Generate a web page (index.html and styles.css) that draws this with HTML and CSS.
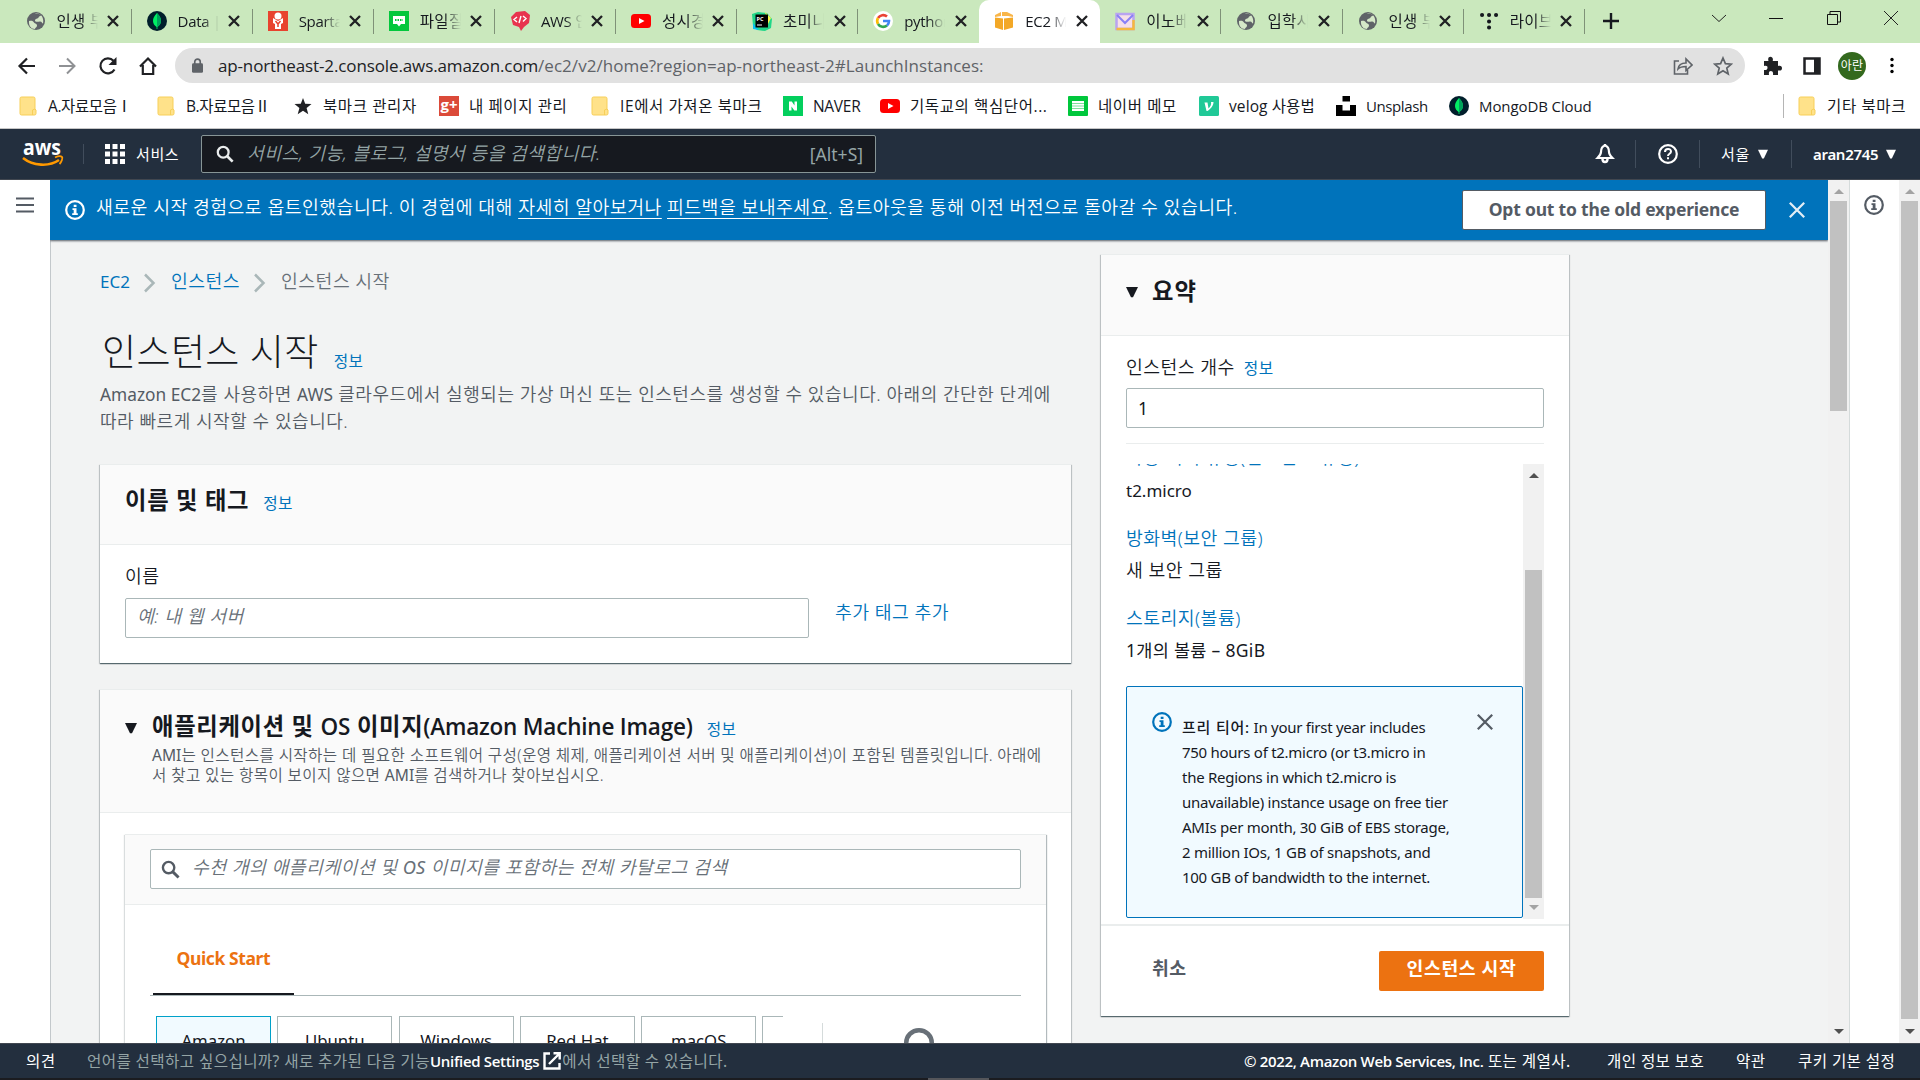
FILE: index.html
```html
<!DOCTYPE html>
<html lang="ko">
<head>
    <meta charset="UTF-8">
    <title>EC2 Management Console</title>
    <link rel="stylesheet" href="styles.css">
</head>
<body>
    <svg class="defs" width="0" height="0">
        <symbol id="globe" viewBox="0 0 20 20">
            <circle cx="10" cy="10" r="9" fill="#5f6368"/>
            <path d="M3 10c3-.5 4 0 5 1.500s3 1 3 3-2 2-2 3.500C5 18 2.500 14.500 3 10zM9 2.500c2-.5 5 .5 6 2-1 1-2 .5-2.500 2S9 7.500 9 9.500s3 1 5 1 2 2 3 2c1-4-.5-8-4-9.500z" fill="#d5e8c8"/>
        </symbol>
        <symbol id="leaf" viewBox="0 0 20 20">
            <circle cx="10" cy="10" r="10" fill="#001e2b"/>
            <path d="M10 2c3 3 4 5.500 4 8s-1.500 4.500-3.600 6v2h-.8v-2C7.500 14.500 6 12.500 6 10s1-5 4-8z" fill="#00ed64"/>
            <path d="M10 2c3 3 4 5.500 4 8s-1.500 4.500-4 6z" fill="#00a35c"/>
        </symbol>
        <symbol id="youtube" viewBox="0 0 20 20">
            <rect y="3" width="20" height="14" rx="3.500" fill="#f00"/>
            <path d="M8 7l5.500 3L8 13z" fill="#fff"/>
        </symbol>
        <symbol id="folder" viewBox="0 0 20 20">
            <path d="M2 2.500a1.500 1.500 0 0 1 1.500-1.500h12A1.500 1.500 0 0 1 17 2.500V13l1 1v3.500a1.500 1.500 0 0 1-1.500 1.500h-13A1.500 1.500 0 0 1 2 17.500z" fill="#ffe28a" stroke="#f7cf59"/>
            <path d="M14.500 19v-5l2.500-1" fill="none" stroke="#f7cf59"/>
        </symbol>
        <symbol id="search" viewBox="0 0 20 20">
            <circle cx="8" cy="8" r="6" fill="none" stroke="currentColor" stroke-width="2.500"/>
            <path d="M12.500 12.500l6 6" stroke="currentColor" stroke-width="3"/>
        </symbol>
        <symbol id="info" viewBox="0 0 20 20">
            <circle cx="10" cy="10" r="8.800" fill="none" stroke="currentColor" stroke-width="2.200"/>
            <path d="M8.700 4.800h2.800v2.200H8.700zM7.500 8.300h4v5h1.300v1.700H7.200v-1.700h1.500v-3.300H7.500z" fill="currentColor"/>
        </symbol>
        <symbol id="close" viewBox="0 0 20 20">
            <path d="M2 2l16 16M18 2L2 18" stroke="currentColor" stroke-width="2.500"/>
        </symbol>
        <symbol id="tabx" viewBox="0 0 12 12">
            <path d="M1 1l10 10M11 1L1 11" stroke="#202124" stroke-width="2.300"/>
        </symbol>
        <symbol id="down" viewBox="0 0 12 12">
            <path d="M0 1h12L7 11.300H5z" fill="currentColor"/>
        </symbol>
    </svg>

    <!-- browser tabs -->
    <div class="tabs">
        <div class="tab"><svg><use href="#globe"/></svg><span>인생 부</span><svg class="x"><use href="#tabx"/></svg></div>
        <div class="tab"><svg><use href="#leaf"/></svg><span class="en">Data | M</span><svg class="x"><use href="#tabx"/></svg></div>
        <div class="tab"><svg viewBox="0 0 20 20"><rect width="20" height="20" fill="#e8432e"/><circle cx="10" cy="5" r="3.500" fill="#fff"/><path d="M5 7l5 3 5-3v5l-2 1v5H7v-5l-2-1z" fill="#fff"/><path d="M7.500 10l2.500 3 2.500-3M10 13v3" stroke="#e8432e" stroke-width="1.500" fill="none"/></svg><span class="en">Spartac</span><svg class="x"><use href="#tabx"/></svg></div>
        <div class="tab"><svg viewBox="0 0 20 20"><rect width="20" height="20" fill="#03c73c"/><path d="M4 5h12v8h-4l-2 2.500L8 13H4z" fill="#fff"/><path d="M6 9h8" stroke="#03c73c" stroke-width="2" stroke-dasharray="1.500 1"/></svg><span>파일질문</span><svg class="x"><use href="#tabx"/></svg></div>
        <div class="tab"><svg viewBox="0 0 20 20"><path d="M1 6l5-5 9-1 5 4-1 8-5 4-3 4-2-4-6-2z" fill="#e8344e"/><path d="M7 6L4 8.500 7 11M13 5l3 2.500-3 3M11 5l-2 7" stroke="#fff" stroke-width="1.400" fill="none"/></svg><span class="en">AWS 인</span><svg class="x"><use href="#tabx"/></svg></div>
        <div class="tab"><svg><use href="#youtube"/></svg><span>성시경</span><svg class="x"><use href="#tabx"/></svg></div>
        <div class="tab"><svg viewBox="0 0 20 20"><path d="M0 3l6-2 9 1 5 6-1 9-6 3-8-1-4-4z" fill="#21d789"/><path d="M13 1l6 6-3 6z" fill="#fcf84a"/><path d="M1 12l6 7-6-1z" fill="#07c3f2"/><rect x="3.500" y="3.500" width="12.500" height="13" fill="#000"/><text x="4.500" y="10" class="pc">PC</text><path d="M5 14h5" stroke="#fff"/></svg><span>초미니</span><svg class="x"><use href="#tabx"/></svg></div>
        <div class="tab"><svg viewBox="0 0 20 20"><circle cx="10" cy="10" r="10" fill="#fff"/><path d="M5 7a6 6 0 0 1 9-1.500" stroke="#ea4335" stroke-width="2.600" fill="none"/><path d="M5 7a6 6 0 0 0 0 6" stroke="#fbbc05" stroke-width="2.600" fill="none"/><path d="M5 13a6 6 0 0 0 9 1.500" stroke="#34a853" stroke-width="2.600" fill="none"/><path d="M10 10h6a6 6 0 0 1-2 4.500" stroke="#4285f4" stroke-width="2.600" fill="none"/></svg><span class="en">python</span><svg class="x"><use href="#tabx"/></svg></div>
        <div class="tab active"><svg viewBox="0 0 20 20"><path d="M1 4l6-3v4l-6 1zM8 1h5l6 3v2l-5-1H8z" fill="#f9b64a"/><path d="M1 6.500l8 1V19l-8-2.500zM10 7.500l9-1V16.500L10 19z" fill="#f3a827"/></svg><span class="en">EC2 Ma</span><svg class="x"><use href="#tabx"/></svg></div>
        <div class="tab"><svg viewBox="0 0 20 20"><path d="M1.500 3h17v15h-17z" fill="#f6dfe8" stroke="#b9a4f0" stroke-width="2.500"/><path d="M1.500 18h17V9" stroke="#f6b93c" stroke-width="2.500" fill="none"/><path d="M2 4l8 8 8-8" fill="none" stroke="#8a80f5" stroke-width="2"/></svg><span>이노베이</span><svg class="x"><use href="#tabx"/></svg></div>
        <div class="tab"><svg><use href="#globe"/></svg><span>입학시</span><svg class="x"><use href="#tabx"/></svg></div>
        <div class="tab"><svg><use href="#globe"/></svg><span>인생 부</span><svg class="x"><use href="#tabx"/></svg></div>
        <div class="tab"><svg viewBox="0 0 20 20"><path d="M3 4h.1M10 4h.1M17 4h.1M10 10.500h.1M10 16.500h.1" stroke="#16191f" stroke-width="4" stroke-linecap="round"/></svg><span>라이브</span><svg class="x"><use href="#tabx"/></svg></div>
        <svg class="newtab" viewBox="0 0 16 16"><path d="M8 0v16M0 8h16" stroke="#16191f" stroke-width="2.400"/></svg>
        <div class="window-controls">
            <svg viewBox="0 0 14 14"><path d="M0 4l7 6.500L14 4" fill="none" stroke="#222"/></svg>
            <svg viewBox="0 0 14 14"><path d="M0 7.500h14" stroke="#111"/></svg>
            <svg viewBox="0 0 14 14"><path d="M.5 3.500h10v10H.5zM3 3.500V.5h10.500V11h-3" fill="none" stroke="#111"/></svg>
            <svg viewBox="0 0 14 14"><path d="M0 0l14 14M14 0L0 14" stroke="#222"/></svg>
        </div>
    </div>

    <!-- address bar -->
    <div class="toolbar">
        <svg class="tool" viewBox="0 0 20 20"><path d="M18 10H3M10 2.500L2.500 10l7.500 7.500" fill="none" stroke="#202124" stroke-width="2.200"/></svg>
        <svg class="tool" viewBox="0 0 20 20"><path d="M2 10h15M10 2.500l7.500 7.500-7.500 7.500" fill="none" stroke="#8f9194" stroke-width="2"/></svg>
        <svg class="tool" viewBox="0 0 20 20"><path d="M16.500 13.500A7.500 7.500 0 1 1 15.500 4.800" fill="none" stroke="#202124" stroke-width="2.200"/><path d="M18.500 1v8h-8z" fill="#202124"/></svg>
        <svg class="tool home" viewBox="0 0 20 20"><path d="M2 10.500L10 2.500l8 8M4.800 9v9h10.400V9" fill="none" stroke="#202124" stroke-width="2.200"/></svg>
        <div class="address">
            <svg class="lock" viewBox="0 0 12 16"><rect y="5.500" width="12" height="10.500" rx="1.500" fill="#5f6368"/><path d="M3 7V4a3 3 0 0 1 6 0v3" fill="none" stroke="#5f6368" stroke-width="1.800"/></svg>
            <div class="url"><span class="host">ap-northeast-2.console.aws.amazon.com</span><span class="path">/ec2/v2/home?region=ap-northeast-2#LaunchInstances:</span></div>
            <svg class="share" viewBox="0 0 20 20"><path d="M6 5H1.500v13h13v-4M5 13c.5-4 3-6 8-6V3l6 6-6 5.500v-4c-4 0-6 .5-8 2.500z" fill="none" stroke="#5f6368" stroke-width="1.600"/></svg>
            <svg class="fav" viewBox="0 0 20 20"><path d="M10 2l2.400 5.600 6 .5-4.600 4 1.400 5.900-5.200-3.200L4.800 18l1.400-5.900-4.600-4 6-.5z" fill="none" stroke="#5f6368" stroke-width="1.700"/></svg>
        </div>
        <svg class="tool ext" viewBox="0 0 20 20"><path d="M2 5h4.500C5.500 2 7 .8 8.500.8S11.500 2 10.700 5H16v5c3-.8 4 .8 4 2.200s-1 3-4 2.200V19h-5c.5-3-.8-4-2.200-4S6.500 16 7 19H2v-5c3 .3 3.500-1 3.500-2.300S5 9.500 2 10z" fill="#202124"/></svg>
        <svg class="tool panel" viewBox="0 0 18 18"><path d="M1.500 1.500h15v15h-15z" fill="#fff" stroke="#202124" stroke-width="2.500"/><path d="M11 1h6v16h-6z" fill="#202124"/></svg>
        <span class="avatar">아란</span>
        <svg class="tool dots" viewBox="0 0 20 20"><circle cx="10" cy="3" r="2"/><circle cx="10" cy="10" r="2"/><circle cx="10" cy="17" r="2"/></svg>
    </div>

    <div class="bookmarks">
        <div class="bookmark b1"><svg><use href="#folder"/></svg><span>A.자료모음Ⅰ</span></div>
        <div class="bookmark b2"><svg><use href="#folder"/></svg><span>B.자료모음Ⅱ</span></div>
        <div class="bookmark b3"><svg viewBox="0 0 20 20"><path d="M10 2l2.200 5.800 6.300.3-4.900 4 1.700 6.200L10 14.800l-5.300 3.500 1.700-6.200-4.900-4 6.300-.3z" fill="#202124"/></svg><span>북마크 관리자</span></div>
        <div class="bookmark b4"><svg viewBox="0 0 20 20"><rect width="20" height="20" fill="#db4a39"/><text x="1.500" y="14" class="gplus">g+</text></svg><span>내 페이지 관리</span></div>
        <div class="bookmark b5"><svg><use href="#folder"/></svg><span>IE에서 가져온 북마크</span></div>
        <div class="bookmark b6"><svg viewBox="0 0 20 20"><rect width="20" height="20" fill="#03cf5d"/><path d="M6 14.500v-9h2.800l2.700 4v-4H14v9h-2.700l-2.800-4v4z" fill="#fff"/></svg><span>NAVER</span></div>
        <div class="bookmark b7"><svg><use href="#youtube"/></svg><span>기독교의 핵심단어...</span></div>
        <div class="bookmark b8"><svg viewBox="0 0 20 20"><rect width="20" height="20" rx="1" fill="#00c73c"/><path d="M4 5h12v10H4z" fill="#fff"/><path d="M4 7.500h12M4 10h12M4 12.500h12" stroke="#7fe09b"/></svg><span>네이버 메모</span></div>
        <div class="bookmark b9"><svg viewBox="0 0 20 20"><rect width="20" height="20" rx="1.500" fill="#20c997"/><path d="M5.500 6.500h3l1 6c2-2 3-4 2.500-6.500h2.500c0 4-3 7-6 9H7.500z" fill="#fff"/></svg><span>velog 사용법</span></div>
        <div class="bookmark b10"><svg viewBox="0 0 20 20"><path d="M6.500 0h7.500v5.500H6.500zM0 9h6.500v5.500H14V9h6v11H0z" fill="#000"/></svg><span>Unsplash</span></div>
        <div class="bookmark b11"><svg><use href="#leaf"/></svg><span>MongoDB Cloud</span></div>
        <div class="bookmark other"><svg><use href="#folder"/></svg><span>기타 북마크</span></div>
    </div>

    <!-- aws navigation -->
    <div class="nav">
        <svg class="aws" viewBox="0 0 42 28"><text x="1" y="15" textLength="38" lengthAdjust="spacingAndGlyphs">aws</text><path d="M1 18c10 8 26 9 36 2" fill="none" stroke="#f90" stroke-width="2.600"/><path d="M33 17.500c3-1.500 6-1.500 7-.5s-.5 5-2.500 7" fill="none" stroke="#f90" stroke-width="1.800"/></svg>
        <svg class="grid" viewBox="0 0 20 20"><path d="M0 0h5v5H0zM7.500 0h5v5h-5zM15 0h5v5h-5zM0 7.500h5v5H0zM7.500 7.500h5v5h-5zM15 7.500h5v5h-5zM0 15h5v5H0zM7.500 15h5v5h-5zM15 15h5v5h-5z" fill="#fff"/></svg>
        <span class="services">서비스</span>
        <div class="nav-search">
            <svg><use href="#search"/></svg>
            <span class="ph ko">서비스, 기능, 블로그, 설명서 등을 검색합니다.</span>
            <span class="key">[Alt+S]</span>
        </div>
        <div class="nav-item bell"><svg viewBox="0 0 20 20"><path d="M10 1.500c-3.500 1-4 3.500-4 6.500 0 2.500-1.500 4-3.500 6h15c-2-2-3.500-3.500-3.500-6 0-3-.5-5.500-4-6.500z" fill="none" stroke="#fff" stroke-width="2.200"/><path d="M10 0v2M7.500 15a2.500 3 0 0 0 5 0" stroke="#fff" stroke-width="2.400" fill="none"/></svg></div>
        <div class="nav-item help"><svg viewBox="0 0 20 20"><circle cx="10" cy="10" r="8.800" fill="none" stroke="#fff" stroke-width="2.200"/><path d="M7 8c0-4 6-4 6-.5 0 2.500-3 2-3 4.500M10 13.300v2" fill="none" stroke="#fff" stroke-width="2"/></svg></div>
        <div class="nav-item region"><span>서울</span><svg><use href="#down"/></svg></div>
        <div class="nav-item user"><span>aran2745</span><svg><use href="#down"/></svg></div>
    </div>

    <div class="page">
        <div class="rail"><svg viewBox="0 0 18 16"><path d="M0 1.500h18M0 8h18M0 14.500h18" stroke="#545b64" stroke-width="2"/></svg></div>
        <div class="main">
            <div class="banner">
                <svg class="banner-info"><use href="#info"/></svg>
                <p class="banner-text ko">새로운 시작 경험으로 옵트인했습니다. 이 경험에 대해 <a>자세히 알아보거나</a> <a>피드백을 보내주세요</a>. 옵트아웃을 통해 이전 버전으로 돌아갈 수 있습니다.</p>
                <button class="optout">Opt out to the old experience</button>
                <svg class="banner-close"><use href="#close"/></svg>
            </div>
            <div class="content">
                <div class="form">
                    <div class="crumbs">
                        <a class="ec2">EC2</a>
                        <svg viewBox="0 0 12 20"><path d="M1 1.500l8.500 8.500L1 18.500" fill="none" stroke="#aab7b8" stroke-width="2.500"/></svg>
                        <a class="ko">인스턴스</a>
                        <svg viewBox="0 0 12 20"><path d="M1 1.500l8.500 8.500L1 18.500" fill="none" stroke="#aab7b8" stroke-width="2.500"/></svg>
                        <span class="ko">인스턴스 시작</span>
                    </div>
                    <div class="heading"><h1>인스턴스 시작</h1><a class="info">정보</a></div>
                    <p class="intro"><span class="lt">Amazon EC2</span>를 사용하면 <span class="lt">AWS</span> 클라우드에서 실행되는 가상 머신 또는 인스턴스를 생성할 수 있습니다. 아래의 간단한 단계에<br>따라 빠르게 시작할 수 있습니다.</p>

                    <div class="card name-card">
                        <div class="card-head"><h2>이름 및 태그</h2><a class="info">정보</a></div>
                        <div class="card-body">
                            <label class="ko">이름</label>
                            <div class="name-row">
                                <div class="input"><span class="ph ko">예: 내 웹 서버</span></div>
                                <a class="ko">추가 태그 추가</a>
                            </div>
                        </div>
                    </div>

                    <div class="card ami-card">
                        <div class="ami-head">
                            <svg class="tri"><use href="#down"/></svg>
                            <div>
                                <div class="ami-title"><h2>애플리케이션 및 <span class="latin">OS</span> 이미지<span class="latin">(Amazon Machine Image)</span></h2><a class="info">정보</a></div>
                                <p class="ami-desc"><span class="lt">AMI</span>는 인스턴스를 시작하는 데 필요한 소프트웨어 구성(운영 체제, 애플리케이션 서버 및 애플리케이션)이 포함된 템플릿입니다. 아래에<br>서 찾고 있는 항목이 보이지 않으면 <span class="lt">AMI</span>를 검색하거나 찾아보십시오.</p>
                            </div>
                        </div>
                        <div class="catalog">
                            <div class="catalog-head">
                                <div class="input"><svg><use href="#search"/></svg><span class="ph ko">수천 개의 애플리케이션 및 <span class="lt">OS</span> 이미지를 포함하는 전체 카탈로그 검색</span></div>
                            </div>
                            <div class="catalog-tabs"><div class="quick">Quick Start</div></div>
                            <div class="os-row">
                                <div class="os-list">
                                    <div class="os selected">Amazon</div>
                                    <div class="os">Ubuntu</div>
                                    <div class="os">Windows</div>
                                    <div class="os">Red Hat</div>
                                    <div class="os">macOS</div>
                                    <div class="os"></div>
                                </div>
                                <div class="browse"><svg viewBox="0 0 34 34"><circle cx="17" cy="17" r="12.800" fill="none" stroke="#687078" stroke-width="4.500"/></svg></div>
                            </div>
                        </div>
                    </div>
                </div>

                <div class="card summary">
                    <div class="sum-head"><svg class="tri"><use href="#down"/></svg><h2>요약</h2></div>
                    <div class="sum-count">
                        <div class="count-label"><label class="ko">인스턴스 개수</label><a class="info">정보</a></div>
                        <div class="input">1</div>
                    </div>
                    <div class="sum-scroll">
                        <div class="sum-list">
                            <a class="ko cut">가상 서버 유형(인스턴스 유형)</a>
                            <p class="micro">t2.micro</p>
                            <a class="ko">방화벽(보안 그룹)</a>
                            <p class="ko">새 보안 그룹</p>
                            <a class="ko">스토리지(볼륨)</a>
                            <p class="gib">1개의 볼륨 – 8GiB</p>
                            <div class="alert">
                                <svg class="alert-info"><use href="#info"/></svg>
                                <p class="alert-text"><b>프리 티어:</b> In your first year includes<br>750 hours of t2.micro (or t3.micro in<br>the Regions in which t2.micro is<br>unavailable) instance usage on free tier<br>AMIs per month, 30 GiB of EBS storage,<br>2 million IOs, 1 GB of snapshots, and<br>100 GB of bandwidth to the internet.</p>
                                <svg class="alert-close"><use href="#close"/></svg>
                            </div>
                        </div>
                        <div class="bar"><i class="up on"></i><b></b><i class="dn"></i></div>
                    </div>
                    <div class="sum-foot"><span class="cancel">취소</span><button class="launch">인스턴스 시작</button></div>
                </div>
            </div>
        </div>
        <div class="bar bar-main"><i class="up"></i><b></b><i class="dn on"></i></div>
        <div class="tools"><svg><use href="#info"/></svg></div>
        <div class="bar bar-page"><i class="up"></i><b></b><i class="dn on"></i></div>
    </div>

    <div class="footer">
        <span class="feedback">의견</span>
        <div class="lang"><span>언어를 선택하고 싶으십니까? 새로 추가된 다음 기능</span><b>Unified Settings</b><svg viewBox="0 0 18 18"><path d="M7 1.500H1.500v15h15V11M6 12L16 2M10.500 1.300h6.200v6.200" fill="none" stroke="#fff" stroke-width="2.400"/></svg><span>에서 선택할 수 있습니다.</span></div>
        <span class="copy"><b>© 2022, Amazon Web Services, Inc.</b> 또는 계열사.</span>
        <span class="f1">개인 정보 보호</span>
        <span class="f2">약관</span>
        <span class="f3">쿠키 기본 설정</span>
    </div>
    <div class="taskbar"><i></i></div>
</body>
</html>
```
FILE: styles.css
```css
* {
    box-sizing: border-box;
}
body {
    margin: 0;
    width: 1920px;
    height: 1080px;
    overflow: hidden;
    display: flex;
    flex-direction: column;
    background: #fff;
    color: #16191f;
    font-family: "Noto Sans", "Noto Sans CJK KR", sans-serif;
    font-size: 17.5px;
    line-height: 24px;
    white-space: nowrap;
}
h1, h2, p {
    margin: 0;
}
svg {
    display: block;
    flex: none;
}
button {
    border: none;
    padding: 0;
    font: inherit;
}
a {
    color: #0073bb;
}
.ko {
    font-size: 18.3px;
    font-weight: 350;
    letter-spacing: .45px;
}
.lt {
    font-weight: 400;
    letter-spacing: 0;
}
.defs {
    position: absolute;
}

/* browser tabs */
.tabs {
    display: flex;
    height: 43px;
    flex: none;
    padding-left: 10.500px;
    background: #cae8bd;
    font-family: "Open Sans", "Noto Sans CJK KR", sans-serif;
    font-size: 15.5px;
}
.tab {
    display: flex;
    align-items: center;
    width: 121.1px;
    height: 43px;
    padding: 0 9px 1px 15px;
    background: linear-gradient(#7f9178, #7f9178) no-repeat right 9px / 1px 25px;
}
.tab:nth-child(8), .tab:nth-child(9) {
    background: none;
}
.tab svg {
    width: 20px;
    height: 20px;
}
.tab span {
    width: 41px;
    margin-left: 11px;
    overflow: hidden;
    letter-spacing: .3px;
    -webkit-mask-image: linear-gradient(90deg, #000 60%, transparent);
    mask-image: linear-gradient(90deg, #000 60%, transparent);
}
.tab .en {
    font-size: 15px;
    letter-spacing: -.3px;
}
.tab .x {
    width: 12px;
    height: 12px;
    margin-left: 9.500px;
}
.tab.active {
    background: #fff;
    border-radius: 10px 10px 0 0;
    box-shadow: 0 10px 0 #fff;
}
.pc {
    font: bold 5.5px "Open Sans", sans-serif;
    fill: #fff;
}
.newtab {
    width: 16px;
    height: 16px;
    margin: 13px 0 0 18.500px;
}
.window-controls {
    display: flex;
    gap: 43.500px;
    margin: 11px 0 0 auto;
    padding-right: 22px;
}
.window-controls svg {
    width: 14px;
    height: 14px;
}

/* toolbar */
.toolbar {
    display: flex;
    align-items: center;
    flex: none;
    height: 45px;
    padding: 0 0 0 17px;
    background: #fff;
    z-index: 1;
}
.tool {
    width: 20px;
    height: 20px;
    margin-right: 20.300px;
}
.home {
    margin-right: 17px;
}
.address {
    display: flex;
    align-items: center;
    width: 1570px;
    height: 35px;
    padding: 0 12px 0 17px;
    border-radius: 18px;
    background: #e1e1e1;
}
.lock {
    width: 11px;
    height: 15px;
}
.url {
    flex: 1;
    margin-left: 15px;
    font-family: "Open Sans", sans-serif;
    font-size: 17px;
    color: #202124;
}
.host {
    letter-spacing: -.12px;
}
.path {
    color: #5f6368;
    letter-spacing: .03px;
}
.share, .fav {
    width: 20px;
    height: 20px;
    margin-left: 20px;
}
.ext {
    margin: 0 21px 0 17px;
}
.panel {
    width: 18px;
    height: 18px;
    margin-right: 17px;
}
.avatar {
    width: 28px;
    height: 28px;
    border-radius: 50%;
    background: #33691e;
    color: #fff;
    font-size: 12px;
    line-height: 27px;
    text-align: center;
}
.dots {
    margin: 0 0 0 16px;
    width: 20px;
    height: 17px;
}

/* bookmarks */
.bookmarks {
    display: flex;
    align-items: center;
    flex: none;
    height: 41px;
    padding: 0 0 5px 18px;
    border-bottom: 1px solid #c6c6c6;
    font-family: "Open Sans", "Noto Sans CJK KR", sans-serif;
    font-size: 15.5px;
    letter-spacing: .6px;
}
.bookmark {
    display: flex;
    align-items: center;
    gap: 10px;
}
.bookmark svg {
    width: 20px;
    height: 20px;
}
.b1, .b2 { letter-spacing: -.4px; }
.b1 { width: 138px; }
.b2 { width: 137px; }
.b3 { width: 146px; }
.b4 { width: 151px; }
.b5 { width: 193px; }
.b6 { width: 97px; letter-spacing: -.3px; }
.b7 { width: 188px; }
.b8 { width: 131px; }
.b9 { width: 137px; letter-spacing: .1px; }
.b10 { width: 113px; }
.b10, .b11 { font-size: 15px; letter-spacing: -.4px; }
.b11 { letter-spacing: -.1px; }
.other {
    margin-left: auto;
    padding: 0 14px 0 13px;
    border-left: 1px solid #b5b5b5;
}
.gplus {
    font: bold 15px "Open Sans", sans-serif;
    letter-spacing: 0;
    fill: #fff;
}

/* aws navigation */
.nav {
    display: flex;
    align-items: center;
    flex: none;
    height: 51px;
    padding-left: 22px;
    background: #232f3e;
    border-bottom: 1px solid #414750;
    color: #fff;
    font-size: 15px;
}
.aws {
    width: 42px;
    height: 28px;
}
.aws text {
    font: bold 21px "Open Sans", sans-serif;
    fill: #fff;
}
.grid {
    width: 42px;
    height: 20px;
    margin-left: 19px;
    padding-left: 21px;
    border-left: 1px solid #414d5c;
}
.services {
    width: 65px;
    margin-left: 11px;
    letter-spacing: .6px;
}
.nav-search {
    display: flex;
    align-items: center;
    width: 675px;
    height: 38px;
    padding: 0 12px 0 14px;
    border: 1px solid #879596;
    border-radius: 2px;
    background: #16191f;
    color: #95a5a6;
}
.nav-search svg {
    width: 18px;
    height: 18px;
    color: #eaeded;
}
.nav-search .ph {
    flex: 1;
    margin: -2px 0 0 13px;
    letter-spacing: .4px;
}
.key {
    font-size: 17.5px;
}
.ph {
    font-style: italic;
}
.nav-item {
    display: flex;
    align-items: center;
    height: 28px;
    border-left: 1px solid #414d5c;
}
.bell {
    width: 40px;
    margin-left: auto;
    border: none;
}
.help {
    width: 64px;
    padding-left: 22px;
}
.region {
    width: 92px;
    padding-left: 21px;
    letter-spacing: .6px;
}
.user {
    width: 129px;
    padding-left: 21px;
}
.nav-item svg {
    width: 20px;
    height: 20px;
}
.region svg, .user svg {
    width: 10px;
    height: 10px;
    margin-left: 8px;
}
.user span {
    font-weight: 600;
    letter-spacing: -.3px;
}

/* page frame */
.page {
    display: flex;
    height: 863px;
    flex: none;
}
.rail {
    width: 50px;
    padding: 17px 0 0 16px;
}
.rail svg {
    width: 18px;
    height: 16px;
}
.main {
    display: flex;
    flex-direction: column;
    width: 1778px;
    overflow: hidden;
}
.banner {
    display: flex;
    align-items: center;
    flex: none;
    height: 60px;
    padding: 0 22px 0 15px;
    background: #0073bb;
    color: #fff;
    box-shadow: 0 1px 2px #545b64;
    z-index: 1;
}
.banner a {
    color: #fff;
    text-decoration: underline;
    text-underline-offset: 4px;
    text-decoration-thickness: 1px;
}
.banner-info {
    width: 20px;
    height: 20px;
}
.banner-text {
    flex: 1;
    margin: -7px 0 0 11px;
    letter-spacing: .48px;
}
.optout {
    width: 304px;
    height: 40px;
    padding-bottom: 2px;
    border: 1px solid #545b64;
    border-radius: 2px;
    background: #fff;
    color: #545b64;
    font-weight: bold;
    letter-spacing: -.2px;
}
.banner-close {
    width: 18px;
    height: 18px;
    margin-left: 22px;
    color: #e3eef5;
}
.content {
    display: flex;
    flex: 1;
    align-items: flex-start;
    min-height: 0;
    padding-left: 49px;
    background: #f2f3f3;
    border-left: 1px solid #c3c8cb;
}
.form {
    width: 971px;
    padding-top: 29px;
}
.crumbs {
    display: flex;
    align-items: center;
    color: #687078;
}
.crumbs svg {
    width: 12px;
    height: 20px;
    margin: 4px 15px 0 14px;
}
.ec2 {
    width: 30px;
    padding-top: 2px;
    font-size: 17px;
    line-height: 22px;
}
.heading {
    display: flex;
    align-items: flex-end;
    height: 44px;
    margin: 37px 0 0 2px;
}
h1 {
    font-size: 37px;
    line-height: 44px;
    font-weight: 300;
    letter-spacing: .4px;
}
.info {
    margin-left: 14px;
    font-size: 15.7px;
    letter-spacing: .4px;
}
.heading .info {
    margin-left: 15px;
    padding-bottom: 1px;
}
.intro {
    margin-top: 7px;
    font-size: 18px;
    font-weight: 350;
    letter-spacing: .55px;
    line-height: 27px;
    color: #545b64;
}
.intro .lt {
    font-size: 17.3px;
}
.card {
    background: #fff;
    border-top: 1px solid #eaeded;
    box-shadow: 0 1px 1px 0 rgba(0, 28, 36, .5), 1px 1px 1px 0 rgba(0, 28, 36, .15), -1px 1px 1px 0 rgba(0, 28, 36, .15);
}
h2 {
    font-family: "Open Sans", "Noto Sans CJK KR", sans-serif;
    font-size: 23.3px;
    line-height: 30px;
    font-weight: 600;
    letter-spacing: .7px;
}
.latin {
    font-size: 22.5px;
    letter-spacing: -.2px;
}
.name-card {
    height: 199px;
    margin-top: 29px;
}
.card-head {
    display: flex;
    align-items: center;
    height: 80px;
    padding: 0 25px 9px;
    background: #fafafa;
    border-bottom: 1px solid #eaeded;
}
.card-head .info {
    padding-top: 5px;
}
.card-body {
    padding: 19px 25px 0;
}
.card-body label {
    display: block;
}
.name-row {
    display: flex;
    align-items: center;
    gap: 26px;
    margin-top: 10px;
}
.name-row > a {
    padding-bottom: 12px;
}
.input {
    display: flex;
    align-items: center;
    height: 40px;
    padding-left: 11px;
    border: 1px solid #aab7b8;
    border-radius: 2px;
    background: #fff;
}
.input .ph {
    padding-bottom: 4px;
}
.name-row .input {
    width: 684px;
    color: #687078;
}
.tri {
    width: 12px;
    height: 12px;
}
.ami-card {
    height: 420px;
    margin-top: 26px;
}
.ami-head {
    display: flex;
    height: 123px;
    padding: 21px 25px 0;
    background: #fafafa;
    border-bottom: 1px solid #eaeded;
}
.ami-head .tri {
    margin: 11px 15px 0 0;
}
.ami-title {
    display: flex;
    align-items: center;
}
.ami-title .info {
    padding-top: 4px;
}
.ami-desc {
    margin-top: 3px;
    font-size: 15.6px;
    font-weight: 350;
    letter-spacing: .38px;
    line-height: 20px;
    color: #545b64;
}
.catalog {
    height: 300px;
    margin: 21px 25px 0;
    border-top: 1px solid #eaeded;
    box-shadow: 1px 1px 1px 0 rgba(0, 28, 36, .3), -1px 1px 1px 0 rgba(0, 28, 36, .15);
}
.catalog-head {
    height: 70px;
    padding: 14px 25px;
    background: #fafafa;
    border-bottom: 1px solid #eaeded;
}
.catalog-head .input {
    padding-left: 10px;
    color: #687078;
}
.catalog-head svg {
    width: 19px;
    height: 19px;
    color: #545b64;
}
.catalog-head .ph {
    margin-left: 12px;
}
.catalog-tabs {
    display: flex;
    align-items: flex-end;
    height: 91px;
    margin: 0 25px;
    padding-left: 3px;
    border-bottom: 1px solid #aab7b8;
}
.quick {
    width: 141px;
    height: 49px;
    padding-left: 23.500px;
    border-bottom: 2px solid #16191f;
    color: #ec7211;
    font-weight: bold;
    letter-spacing: -.4px;
}
.os-row {
    display: flex;
    margin: 20px 0 0 31px;
}
.os-list {
    display: flex;
    flex: none;
    gap: 6.3px;
    width: 627px;
    overflow: hidden;
}
.os {
    flex: none;
    width: 115px;
    height: 60px;
    padding-top: 12px;
    border: 1px solid #aab7b8;
    font-size: 16.8px;
    text-align: center;
}
.os.selected {
    background: #f1faff;
    border-color: #00a1c9;
}
.browse {
    margin: 7px 0 0 39px;
    padding: 3px 0 0 79px;
    border-left: 1px solid #d5dbdb;
}
.browse svg {
    width: 34px;
    height: 34px;
}

/* summary */
.summary {
    width: 468px;
    height: 762px;
    margin: 14px 0 0 30px;
}
.sum-head {
    display: flex;
    align-items: center;
    height: 81px;
    padding: 0 25px 7px;
    background: #fafafa;
    border-bottom: 1px solid #eaeded;
}
.sum-head h2 {
    margin: -1px 0 0 14px;
    letter-spacing: 1px;
}
.sum-count {
    height: 108px;
    margin: 0 25px;
    padding-top: 19px;
    border-bottom: 1px solid #eaeded;
}
.count-label {
    display: flex;
    align-items: center;
    height: 24px;
    margin-bottom: 9px;
}
.count-label .info {
    margin-left: 9px;
    padding-top: 2px;
}
.sum-scroll {
    display: flex;
    height: 455px;
    margin: 20px 25px 0;
    overflow: hidden;
}
.sum-list {
    width: 397px;
}
.sum-list > a, .sum-list > p {
    display: block;
    height: 24px;
}
.sum-list > .cut {
    margin-top: -19px;
}
.sum-list > p {
    margin: 8px 0 24px;
}
.sum-list > .micro {
    margin: 10px 0 23px;
    font-size: 17px;
}
.sum-list > .gib {
    margin-bottom: 0;
    letter-spacing: .3px;
}
.alert {
    display: flex;
    height: 232px;
    margin-top: 24px;
    padding: 25px 0 0 25px;
    border: 1px solid #0073bb;
    border-radius: 2px;
    background: #f1faff;
    font-size: 15px;
    line-height: 25px;
    letter-spacing: -.27px;
}
.alert b {
    font-weight: 500;
    letter-spacing: .8px;
}
.alert-info {
    width: 20px;
    height: 20px;
    color: #0073bb;
}
.alert-text {
    width: 285px;
    margin: 3px 0 0 10px;
}
.alert-close {
    width: 18px;
    height: 18px;
    margin-top: 1px;
    margin-left: 9px;
    color: #545b64;
}
.sum-foot {
    display: flex;
    justify-content: space-between;
    height: 92px;
    margin-top: 5px;
    padding: 25px 25px 0 51px;
    border-top: 2px solid #eaeded;
    font-size: 18.3px;
    font-weight: bold;
    letter-spacing: .43px;
}
.cancel {
    padding-top: 5px;
    color: #545b64;
}
.launch {
    width: 165px;
    height: 40px;
    padding-bottom: 6px;
    border-radius: 2px;
    background: #ec7211;
    color: #fff;
    font-weight: bold;
    letter-spacing: .6px;
}

/* scrollbars */
.bar {
    display: flex;
    flex-direction: column;
    width: 21px;
    padding: 0 2px;
    background: #f1f1f1;
}
.bar b {
    height: 328px;
    margin-top: 85px;
    background: #c1c1c1;
}
.bar i {
    width: 0;
    height: 0;
    border: 5px solid transparent;
}
.bar .up {
    margin: 9px 4px 7px;
    border-top: none;
    border-bottom-color: #a3a3a3;
}
.bar .dn {
    margin: auto 4px 9px;
    border-bottom: none;
    border-top-color: #a3a3a3;
}
.bar .up.on {
    border-bottom-color: #505050;
}
.bar .dn.on {
    border-top-color: #505050;
}
.bar-main b {
    height: 210px;
    margin: 0;
}
.bar-page b {
    height: 818px;
    margin: 0;
}
.tools {
    width: 50px;
    padding: 15px 0 0 14px;
    border-left: 1px solid #d5dbdb;
}
.tools svg {
    width: 20px;
    height: 20px;
    color: #545b64;
}

/* footer */
.footer {
    display: flex;
    align-items: center;
    flex: none;
    height: 35px;
    padding-left: 26px;
    border-top: 1px solid #414750;
    background: #232f3e;
    color: #fff;
    font-size: 15.6px;
    letter-spacing: .38px;
}
.feedback {
    width: 61px;
}
.lang {
    display: flex;
    align-items: center;
    flex: 1;
    color: #95a5a6;
}
.footer b {
    color: #fff;
    font-family: "Open Sans", sans-serif;
    font-size: 15px;
    font-weight: 600;
    letter-spacing: -.32px;
}
.lang svg {
    width: 18px;
    height: 18px;
    margin: 0 1px 0 4px;
}
.copy {
    width: 363px;
}
.f1 {
    width: 129px;
}
.f2 {
    width: 62px;
}
.f3 {
    width: 122px;
}
.taskbar {
    height: 2px;
    padding-left: 928px;
    background: #1b1c20;
}
.taskbar i {
    display: block;
    width: 61px;
    height: 2px;
    background: #55565a;
}
```
